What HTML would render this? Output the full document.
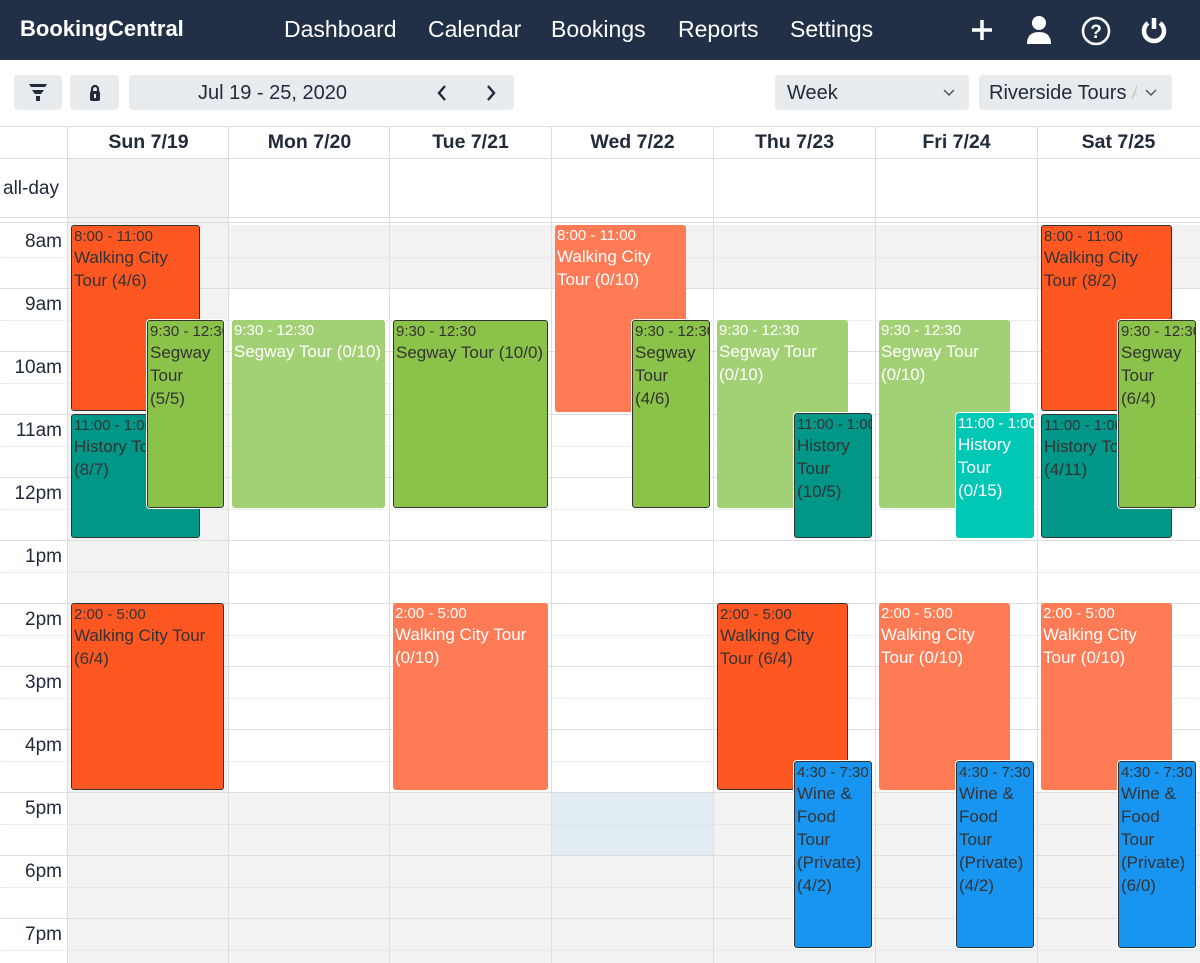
<!DOCTYPE html>
<html><head><meta charset="utf-8">
<style>
*{box-sizing:border-box;margin:0;padding:0}
body{width:1200px;height:963px;overflow:hidden;font-family:"Liberation Sans",sans-serif;background:#fff;position:relative;color:#212b3a}
.nav{position:absolute;left:0;top:0;width:1200px;height:60px;background:#223047}
.nav .logo{position:absolute;left:20px;top:16px;font-size:22px;font-weight:bold;color:#fff}
.nav a{position:absolute;top:16px;font-size:23px;color:#fff}
.btn{position:absolute;top:75px;height:35px;background:#e8ebee;border-radius:4px}
.a{position:absolute}
.hl{position:absolute;left:0;width:1200px;height:1px;background:#ddd}
.dl{position:absolute;left:0;width:1200px;height:0;border-top:1px dotted #ddd}
.vl{position:absolute;top:126px;width:1px;height:837px;background:#ddd}
.hd{position:absolute;top:131px;font-size:19.5px;font-weight:bold;text-align:center;width:161px}
.tm{position:absolute;left:0;width:62px;text-align:right;font-size:19px}
.ev{position:absolute;border-radius:3px;padding:2px 2px;overflow:hidden;white-space:nowrap}
.ev .t{font-size:15px;line-height:18px}
.ev .n{font-size:17px;line-height:23px;white-space:normal}
.dk{border:1px solid #333;color:#333}
.lt{color:#fff}
.ol{box-shadow:0 0 0 1px #fff}
</style></head><body>
<div class="nav">
<div class="logo">BookingCentral</div>
<a style="left:284px">Dashboard</a><a style="left:428px">Calendar</a><a style="left:551px">Bookings</a><a style="left:678px">Reports</a><a style="left:790px">Settings</a>
<svg class="a" style="left:970px;top:18px" width="24" height="24"><path d="M12 2V22M2 12H22" stroke="#fff" stroke-width="3.5"/></svg>
<svg class="a" style="left:1026px;top:14px" width="26" height="30"><circle cx="13" cy="9" r="7" fill="#fff"/><path d="M1 30 Q1 18 13 18 Q25 18 25 30Z" fill="#fff"/></svg>
<svg class="a" style="left:1081px;top:16px" width="30" height="30"><circle cx="15" cy="15" r="13" fill="none" stroke="#fff" stroke-width="2.5"/><text x="15" y="22" fill="#fff" font-size="19" font-weight="bold" text-anchor="middle" font-family="Liberation Sans">?</text></svg>
<svg class="a" style="left:1139px;top:15px" width="30" height="30"><path d="M9 8A10 10 0 1 0 21 8" fill="none" stroke="#fff" stroke-width="4.5"/><path d="M15 3V14" stroke="#fff" stroke-width="4.5"/></svg>
</div>
<div class="btn" style="left:14px;width:48px"><svg class="a" style="left:15px;top:9px" width="18" height="17"><path d="M0 0H18L16 3H2Z M3 6H15L12 10H6Z M7 12H11V17H7Z" fill="#212b3a"/></svg></div>
<div class="btn" style="left:70px;width:49px"><svg class="a" style="left:19px;top:9px" width="12" height="17"><path d="M3 8V5A3 3 0 0 1 9 5V8" fill="none" stroke="#212b3a" stroke-width="2.2"/><rect x="1" y="7" width="10" height="10" rx="2" fill="#212b3a"/><rect x="5" y="10" width="2" height="4" fill="#e8ebee"/></svg></div>
<div class="btn" style="left:129px;width:385px"><span class="a" style="left:69px;top:7px;font-size:20px">Jul 19 - 25, 2020</span>
<svg class="a" style="left:307px;top:9px" width="12" height="18"><path d="M9 2L3 9L9 16" fill="none" stroke="#212b3a" stroke-width="2.4"/></svg>
<svg class="a" style="left:356px;top:9px" width="12" height="18"><path d="M3 2L9 9L3 16" fill="none" stroke="#212b3a" stroke-width="2.4"/></svg></div>
<div class="btn" style="left:775px;width:194px"><span class="a" style="left:12px;top:7px;font-size:20px">Week</span><svg class="a" style="left:168px;top:14px" width="12" height="8"><path d="M1 1L6 6L11 1" fill="none" stroke="#555" stroke-width="1.5"/></svg></div>
<div class="btn" style="left:979px;width:193px;overflow:hidden"><span class="a" style="left:10px;top:7px;font-size:20px;white-space:nowrap">Riverside Tours <span style="color:#ccc">A</span></span><div class="a" style="left:158px;top:0;width:35px;height:35px;background:#e8ebee"></div><svg class="a" style="left:166px;top:14px" width="12" height="8"><path d="M1 1L6 6L11 1" fill="none" stroke="#555" stroke-width="1.5"/></svg></div>

<div class="a" style="left:68px;top:158px;width:161px;height:805px;background:#f2f2f2"></div>
<div class="a" style="left:68px;top:225px;width:1132px;height:63px;background:#f2f2f2"></div>
<div class="a" style="left:68px;top:792px;width:1132px;height:171px;background:#f2f2f2"></div>
<div class="a" style="left:552px;top:792px;width:162px;height:63px;background:#e1edf2"></div>

<div class="hl" style="top:126px"></div>
<div class="hl" style="top:158px"></div>
<div class="hl" style="top:217px"></div>
<div class="hl" style="top:222px"></div>
<div class="hl" style="top:288px"></div><div class="hl" style="top:351px"></div><div class="hl" style="top:414px"></div><div class="hl" style="top:477px"></div><div class="hl" style="top:540px"></div><div class="hl" style="top:603px"></div><div class="hl" style="top:666px"></div><div class="hl" style="top:729px"></div><div class="hl" style="top:792px"></div><div class="hl" style="top:855px"></div><div class="hl" style="top:918px"></div>
<div class="dl" style="top:257px"></div><div class="dl" style="top:320px"></div><div class="dl" style="top:383px"></div><div class="dl" style="top:446px"></div><div class="dl" style="top:509px"></div><div class="dl" style="top:572px"></div><div class="dl" style="top:635px"></div><div class="dl" style="top:698px"></div><div class="dl" style="top:761px"></div><div class="dl" style="top:824px"></div><div class="dl" style="top:887px"></div><div class="dl" style="top:950px"></div>
<div class="vl" style="left:67px"></div><div class="vl" style="left:228px"></div><div class="vl" style="left:389px"></div><div class="vl" style="left:551px"></div><div class="vl" style="left:713px"></div><div class="vl" style="left:875px"></div><div class="vl" style="left:1037px"></div>

<div class="hd" style="left:68px">Sun 7/19</div><div class="hd" style="left:229px">Mon 7/20</div><div class="hd" style="left:390px">Tue 7/21</div><div class="hd" style="left:552px">Wed 7/22</div><div class="hd" style="left:714px">Thu 7/23</div><div class="hd" style="left:876px">Fri 7/24</div><div class="hd" style="left:1038px">Sat 7/25</div>
<div class="a" style="left:3px;top:178px;font-size:19px">all-day</div>
<div class="tm" style="top:231px">8am</div><div class="tm" style="top:294px">9am</div><div class="tm" style="top:357px">10am</div><div class="tm" style="top:420px">11am</div><div class="tm" style="top:483px">12pm</div><div class="tm" style="top:546px">1pm</div><div class="tm" style="top:609px">2pm</div><div class="tm" style="top:672px">3pm</div><div class="tm" style="top:735px">4pm</div><div class="tm" style="top:798px">5pm</div><div class="tm" style="top:861px">6pm</div><div class="tm" style="top:924px">7pm</div>

<div class="ev dk" style="left:71px;top:225px;width:129px;height:186px;background:#ff5722"><div class="t">8:00 - 11:00</div><div class="n">Walking City Tour (4/6)</div></div>
<div class="ev dk" style="left:71px;top:414px;width:129px;height:124px;background:#009688"><div class="t">11:00 - 1:00</div><div class="n" style="white-space:nowrap">History Tour<br>(8/7)</div></div>
<div class="ev dk ol" style="left:147px;top:320px;width:77px;height:188px;background:#8bc34a"><div class="t">9:30 - 12:30</div><div class="n">Segway Tour (5/5)</div></div>
<div class="ev dk" style="left:71px;top:603px;width:153px;height:187px;background:#ff5722"><div class="t">2:00 - 5:00</div><div class="n">Walking City Tour<br>(6/4)</div></div>
<div class="ev lt" style="left:232px;top:320px;width:153px;height:188px;background:#a2d175"><div class="t">9:30 - 12:30</div><div class="n">Segway Tour (0/10)</div></div>
<div class="ev dk" style="left:393px;top:320px;width:155px;height:188px;background:#8bc34a"><div class="t">9:30 - 12:30</div><div class="n">Segway Tour (10/0)</div></div>
<div class="ev lt" style="left:393px;top:603px;width:155px;height:187px;background:#ff7b55"><div class="t">2:00 - 5:00</div><div class="n">Walking City Tour (0/10)</div></div>
<div class="ev lt" style="left:555px;top:225px;width:131px;height:187px;background:#ff7b55"><div class="t">8:00 - 11:00</div><div class="n">Walking City<br>Tour (0/10)</div></div>
<div class="ev dk ol" style="left:632px;top:320px;width:78px;height:188px;background:#8bc34a"><div class="t">9:30 - 12:30</div><div class="n">Segway Tour (4/6)</div></div>
<div class="ev lt" style="left:717px;top:320px;width:131px;height:188px;background:#a2d175"><div class="t">9:30 - 12:30</div><div class="n">Segway Tour (0/10)</div></div>
<div class="ev dk ol" style="left:794px;top:413px;width:78px;height:125px;background:#009688"><div class="t">11:00 - 1:00</div><div class="n">History Tour (10/5)</div></div>
<div class="ev dk" style="left:717px;top:603px;width:131px;height:187px;background:#ff5722"><div class="t">2:00 - 5:00</div><div class="n">Walking City<br>Tour (6/4)</div></div>
<div class="ev dk ol" style="left:794px;top:761px;width:78px;height:187px;background:#1895f0"><div class="t">4:30 - 7:30</div><div class="n">Wine &amp;<br>Food<br>Tour<br>(Private)<br>(4/2)</div></div>
<div class="ev lt" style="left:879px;top:320px;width:131px;height:188px;background:#a2d175"><div class="t">9:30 - 12:30</div><div class="n">Segway Tour<br>(0/10)</div></div>
<div class="ev lt ol" style="left:956px;top:413px;width:78px;height:125px;background:#00c8b4"><div class="t">11:00 - 1:00</div><div class="n">History Tour (0/15)</div></div>
<div class="ev lt" style="left:879px;top:603px;width:131px;height:187px;background:#ff7b55"><div class="t">2:00 - 5:00</div><div class="n">Walking City<br>Tour (0/10)</div></div>
<div class="ev dk ol" style="left:956px;top:761px;width:78px;height:187px;background:#1895f0"><div class="t">4:30 - 7:30</div><div class="n">Wine &amp;<br>Food<br>Tour<br>(Private)<br>(4/2)</div></div>
<div class="ev dk" style="left:1041px;top:225px;width:131px;height:186px;background:#ff5722"><div class="t">8:00 - 11:00</div><div class="n">Walking City<br>Tour (8/2)</div></div>
<div class="ev dk" style="left:1041px;top:414px;width:131px;height:124px;background:#009688"><div class="t">11:00 - 1:00</div><div class="n" style="white-space:nowrap">History Tour<br>(4/11)</div></div>
<div class="ev dk ol" style="left:1118px;top:320px;width:78px;height:188px;background:#8bc34a"><div class="t">9:30 - 12:30</div><div class="n">Segway<br>Tour<br>(6/4)</div></div>
<div class="ev lt" style="left:1041px;top:603px;width:131px;height:187px;background:#ff7b55"><div class="t">2:00 - 5:00</div><div class="n">Walking City<br>Tour (0/10)</div></div>
<div class="ev dk ol" style="left:1118px;top:761px;width:78px;height:187px;background:#1895f0"><div class="t">4:30 - 7:30</div><div class="n">Wine &amp;<br>Food<br>Tour<br>(Private)<br>(6/0)</div></div>
</body></html>
